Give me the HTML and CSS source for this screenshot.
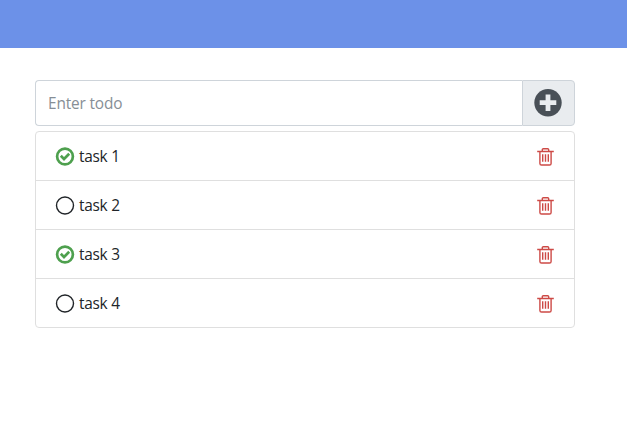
FILE: index.html
```html
<!DOCTYPE html>
<html lang="en">
<head>
<meta charset="utf-8">
<title>Todo</title>
<link rel="stylesheet" href="styles.css">
</head>
<body>
<svg class="defs" width="0" height="0">
  <symbol id="done" viewBox="0 0 20 20"><circle cx="10" cy="9.5" r="7.9" fill="none" stroke="currentColor" stroke-width="2.7"/><path d="M5.8 8.8l3.2 3.2 5.2-5.2" fill="none" stroke="currentColor" stroke-width="2.7"/></symbol>
  <symbol id="open" viewBox="0 0 20 20"><circle cx="10" cy="9.5" r="8.5" fill="none" stroke="currentColor" stroke-width="1.4"/></symbol>
  <symbol id="trash" viewBox="0 0 20 20"><path d="M1.2 4.5h16.6M3.9 4.5v11.9q0 1.6 1.6 1.6h8q1.6 0 1.6-1.6V4.5M6.3 4.5V2.7q0-1 1-1h4.4q1 0 1 1V4.5M6.7 7.3v7.4M9.5 7.3v7.4M12.3 7.3v7.4" fill="none" stroke="currentColor" stroke-width="1.4"/></symbol>
</svg>
<header class="topbar"></header>
<main class="container">
  <div class="input-group">
    <input class="todo-input" type="text" placeholder="Enter todo">
    <button class="add" aria-label="Add"><svg width="28" height="28" viewBox="0 0 28 28"><circle cx="14" cy="13.7" r="13.7" fill="#495057"/><path d="M14 5.4v16.6M5.7 13.7h16.6" stroke="#e9ecef" stroke-width="4.8"/></svg></button>
  </div>
  <ul class="list">
    <li class="item"><svg class="icon done"><use href="#done"/></svg><span class="label">task 1</span><svg class="icon trash"><use href="#trash"/></svg></li>
    <li class="item"><svg class="icon"><use href="#open"/></svg><span class="label">task 2</span><svg class="icon trash"><use href="#trash"/></svg></li>
    <li class="item"><svg class="icon done"><use href="#done"/></svg><span class="label">task 3</span><svg class="icon trash"><use href="#trash"/></svg></li>
    <li class="item"><svg class="icon"><use href="#open"/></svg><span class="label">task 4</span><svg class="icon trash"><use href="#trash"/></svg></li>
  </ul>
</main>
</body>
</html>
```
FILE: styles.css
```css
* { box-sizing: border-box; }
body {
  margin: 0;
  background: #fff;
  color: #212529;
  font: 15.4px/24px "Open Sans", "Noto Sans", sans-serif;
}
.defs { display: block; }
.topbar { height: 48px; background: #6c91e8; }
.container { width: 540px; margin: 32px 0 0 35px; }
.input-group { display: flex; height: 46px; margin-bottom: 5px; }
.todo-input {
  flex: 1;
  min-width: 0;
  padding: 2px 12px 0;
  border: 1px solid #ced4da;
  border-right: 0;
  border-radius: 4px 0 0 4px;
  font: inherit;
  letter-spacing: -0.15px;
}
.todo-input::placeholder { color: #868e96; opacity: 1; }
.add {
  display: flex;
  align-items: center;
  justify-content: center;
  width: 53px;
  padding: 0 1px 1px 0;
  border: 1px solid #ced4da;
  border-radius: 0 4px 4px 0;
  background: #e9ecef;
}
.list {
  margin: 0;
  padding: 0;
  list-style: none;
  border: 1px solid #dfdfdf;
  border-radius: 4px;
}
.item {
  display: flex;
  align-items: center;
  height: 49px;
  padding: 1px 18px 0 19px;
  border-bottom: 1px solid #dfdfdf;
}
.item:last-child { height: 48px; border-bottom: 0; }
.icon { width: 20px; height: 20px; }
.done { color: #4ea04e; }
.trash { color: #cd4a46; }
.label { flex: 1; margin-left: 4px; padding-top: 1px; letter-spacing: -0.25px; }
```
